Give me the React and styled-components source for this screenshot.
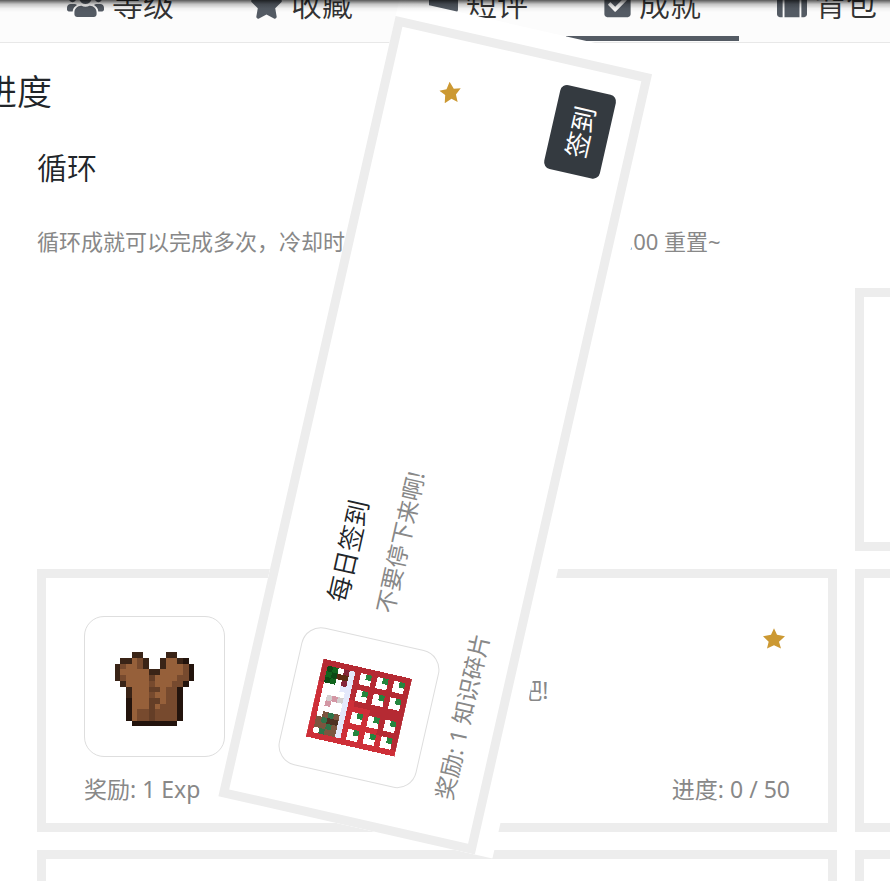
import React from "react";
import styled, { createGlobalStyle, css } from "styled-components";
import { FaUsers, FaStar, FaCommentAlt, FaCheckSquare, FaSuitcase } from "react-icons/fa";

const GlobalStyle = createGlobalStyle`
  * { box-sizing: border-box; }
  body {
    margin: 0;
    background: #fff;
    color: #212529;
    font-family: "Noto Sans", "Noto Sans CJK SC", sans-serif;
    font-weight: 350;
  }
  h1, h2, h3, p, ul { margin: 0; padding: 0; font-weight: inherit; }
`;

const Page = styled.div`
  position: relative;
  height: 100vh;
  overflow: hidden;
`;

const TopShadow = styled.div`
  position: absolute;
  inset: 0 0 auto;
  height: 12px;
  z-index: 3;
  pointer-events: none;
  background: linear-gradient(rgba(0, 0, 0, 0.65), rgba(0, 0, 0, 0.22) 35%, rgba(0, 0, 0, 0.05) 70%, transparent);
`;

const Tabs = styled.nav`
  display: flex;
  height: 76px;
  margin-top: -33px;
  padding-left: 29px;
  background: #fcfcfc;
  border-bottom: 1px solid #e8e8e8;
`;

const Tab = styled.a`
  display: flex;
  flex: none;
  align-items: center;
  gap: 8px;
  height: 74px;
  padding: 5px 38px 0;
  border-bottom: 5px solid ${(p) => (p.$active ? "#545b64" : "transparent")};
  color: #333;
  font-size: 31px;
  line-height: 40px;
  white-space: nowrap;
  text-decoration: none;

  svg {
    width: ${(p) => p.$iconWidth}px;
    height: 30px;
    color: #545b64;
  }
`;

const Content = styled.main`
  padding: 24px 0 0 37px;
`;

const PageTitle = styled.h1`
  margin-left: -55px;
  font-size: 35px;
  line-height: 50px;
`;

const SectionTitle = styled.h2`
  margin-top: 30px;
  font-size: 30px;
  line-height: 42px;
`;

const Intro = styled.p`
  margin: 37px 0 32px;
  color: #888;
  font-size: 22px;
  font-weight: 400;
  line-height: 30px;
  white-space: nowrap;
`;

const Grid = styled.ul`
  display: grid;
  grid-template-columns: repeat(2, minmax(818px, 1fr));
  list-style: none;
`;

const Cell = styled.li`
  padding: 0 18px 18px 0;
  background: #fff;
  ${(p) =>
    p.$spinning &&
    css`
      position: relative;
      z-index: 2;
      transform: rotate(-77.2deg);
    `}
`;

const Card = styled.article`
  display: flex;
  justify-content: space-between;
  min-height: 263px;
  padding: 38px 20px 20px 38px;
  border: 9px solid #ededed;
  background: #fff;
`;

const Main = styled.div`
  display: flex;
  flex-direction: column;
  gap: 19px;
`;

const Summary = styled.div`
  display: flex;
  gap: 28px;
`;

const IconFrame = styled.div`
  display: grid;
  place-items: center;
  width: 141px;
  height: 141px;
  border: 1px solid #dedede;
  border-radius: 20px;
`;

const Texts = styled.div`
  display: flex;
  flex-direction: column;
  gap: 18px;
  padding-top: 7px;
`;

const CardTitle = styled.h3`
  font-size: 26px;
  line-height: 36px;
  white-space: nowrap;
`;

const Note = styled.p`
  color: #888;
  font-size: 23px;
  font-weight: 400;
  line-height: 26px;
  white-space: nowrap;
`;

const Aside = styled.div`
  display: flex;
  flex-direction: column;
  align-items: flex-end;
  justify-content: space-between;
`;

const Rarity = styled.svg`
  width: 22px;
  height: 21px;
  margin: 12px 23px 0 0;
  fill: #cc9933;
`;

const Progress = styled(Note)`
  padding: 0 18px 1px 0;
`;

const SignButton = styled.button`
  width: 86px;
  height: 57px;
  padding: 0;
  border: 0;
  border-radius: 7px;
  background: #343a40;
  color: #fff;
  font: inherit;
  font-size: 26px;
  font-weight: 400;
  line-height: 36px;
`;

const PixelArt = styled.svg`
  display: block;
  width: 91px;
  height: 91px;
  shape-rendering: crispEdges;
`;

const TUNIC_COLORS = { l: "#96603a", m: "#774a2e", d: "#643e27", k: "#3a2417", b: "#23140d" };
const TUNIC = [
  "...kk....kk...",
  ".kklmk..kllkb.",
  "kmllmk..klllmb",
  "klllllkkllllmb",
  "kmlllldllllmmb",
  ".kllllmlllmmb.",
  "..klllddlmmb..",
  "..klllmllmmb..",
  "..blllddlmmb..",
  "..bllldlmmmb..",
  "..blmmdmmmmb..",
  "..blmmdmmmmb..",
  "...bbbbbbbb...",
];

const SHARD_COLORS = {
  R: "#b52a33", r: "#ce2f38", g: "#11651d", h: "#0c4a15", w: "#ffffff", v: "#e4e8fb",
  M: "#842438", n: "#5c2b12", s: "#d3cfcf", p: "#d397a4", b: "#7b553f", e: "#2f7449", D: "#4d3022", G: "#25863f",
};
const SHARD = [
  "RRRRRRRRRRRRRRRR",
  "RhgwMvRwGRwGRwGR",
  "RghnnvRwwRwwRwwR",
  "RhgwMvRRRRRRRRRR",
  "rwwwvvRwGRwGRwGR",
  "rwwwwvRwwRwwRwwR",
  "rwspsvrRRRRRRRRR",
  "rwpwwvrrrrRRRRRR",
  "rwwwwvrwGrwGRwGR",
  "rwbebvrwwrwwRwwR",
  "rbeDDvrrrrrrRRRR",
  "rbbebvrwGrwGrwGR",
  "rwebbvrwwrwwrwwR",
  "rrrrrrrrrrrrrrrr",
];

function Pixels({ rows, colors }) {
  return rows.flatMap((row, y) =>
    [...row].map((c, x) =>
      colors[c] ? <rect key={x + "-" + y} x={x} y={y} width="1" height="1" fill={colors[c]} /> : null
    )
  );
}

const TunicIcon = () => (
  <PixelArt viewBox="0 0 16 16" aria-hidden="true">
    <g transform="translate(1 2)">
      <Pixels rows={TUNIC} colors={TUNIC_COLORS} />
    </g>
  </PixelArt>
);

const ShardIcon = () => (
  <PixelArt viewBox="0 0 16 16" aria-hidden="true">
    <g transform="matrix(0 1 -1 0 15 0)">
      <Pixels rows={SHARD} colors={SHARD_COLORS} />
    </g>
  </PixelArt>
);

const TABS = [
  { label: "等级", Icon: FaUsers, width: 37 },
  { label: "收藏", Icon: FaStar, width: 33 },
  { label: "短评", Icon: FaCommentAlt, width: 29 },
  { label: "成就", Icon: FaCheckSquare, width: 27, active: true },
  { label: "背包", Icon: FaSuitcase, width: 30 },
];

function Achievement({ icon, title, note, reward, children }) {
  return (
    <Card>
      <Main>
        <Summary>
          <IconFrame>{icon}</IconFrame>
          <Texts>
            <CardTitle>{title}</CardTitle>
            <Note>{note}</Note>
          </Texts>
        </Summary>
        <Note>{reward}</Note>
      </Main>
      <Aside>
        <Rarity viewBox="0 0 66 62" aria-hidden="true">
          <path d="M33 0 42 20 66 24 48 41 54 61 33 51 12 61 17 41 0 24 24 20Z" />
        </Rarity>
        {children}
      </Aside>
    </Card>
  );
}

export default function App() {
  return (
    <Page>
      <GlobalStyle />
      <TopShadow />
      <Tabs>
        {TABS.map(({ label, Icon, width, active }) => (
          <Tab key={label} href="#" $iconWidth={width} $active={active}>
            <Icon />
            {label}
          </Tab>
        ))}
      </Tabs>
      <Content>
        <PageTitle>进度</PageTitle>
        <SectionTitle>循环</SectionTitle>
        <Intro>循环成就可以完成多次，冷却时间结束后可再次完成，每日 0:00 重置~</Intro>
        <Grid>
          <Cell $spinning>
            <Achievement icon={<ShardIcon />} title="每日签到" note="不要停下来啊!" reward="奖励: 1 知识碎片">
              <SignButton type="button">签到</SignButton>
            </Achievement>
          </Cell>
          <Cell><Card /></Cell>
          <Cell>
            <Achievement icon={<TunicIcon />} title="小试身手" note="努力完成1次战斗历练自己吧!" reward="奖励: 1 Exp">
              <Progress>进度: 0 / 50</Progress>
            </Achievement>
          </Cell>
          <Cell><Card /></Cell>
          <Cell><Card /></Cell>
          <Cell><Card /></Cell>
        </Grid>
      </Content>
    </Page>
  );
}
